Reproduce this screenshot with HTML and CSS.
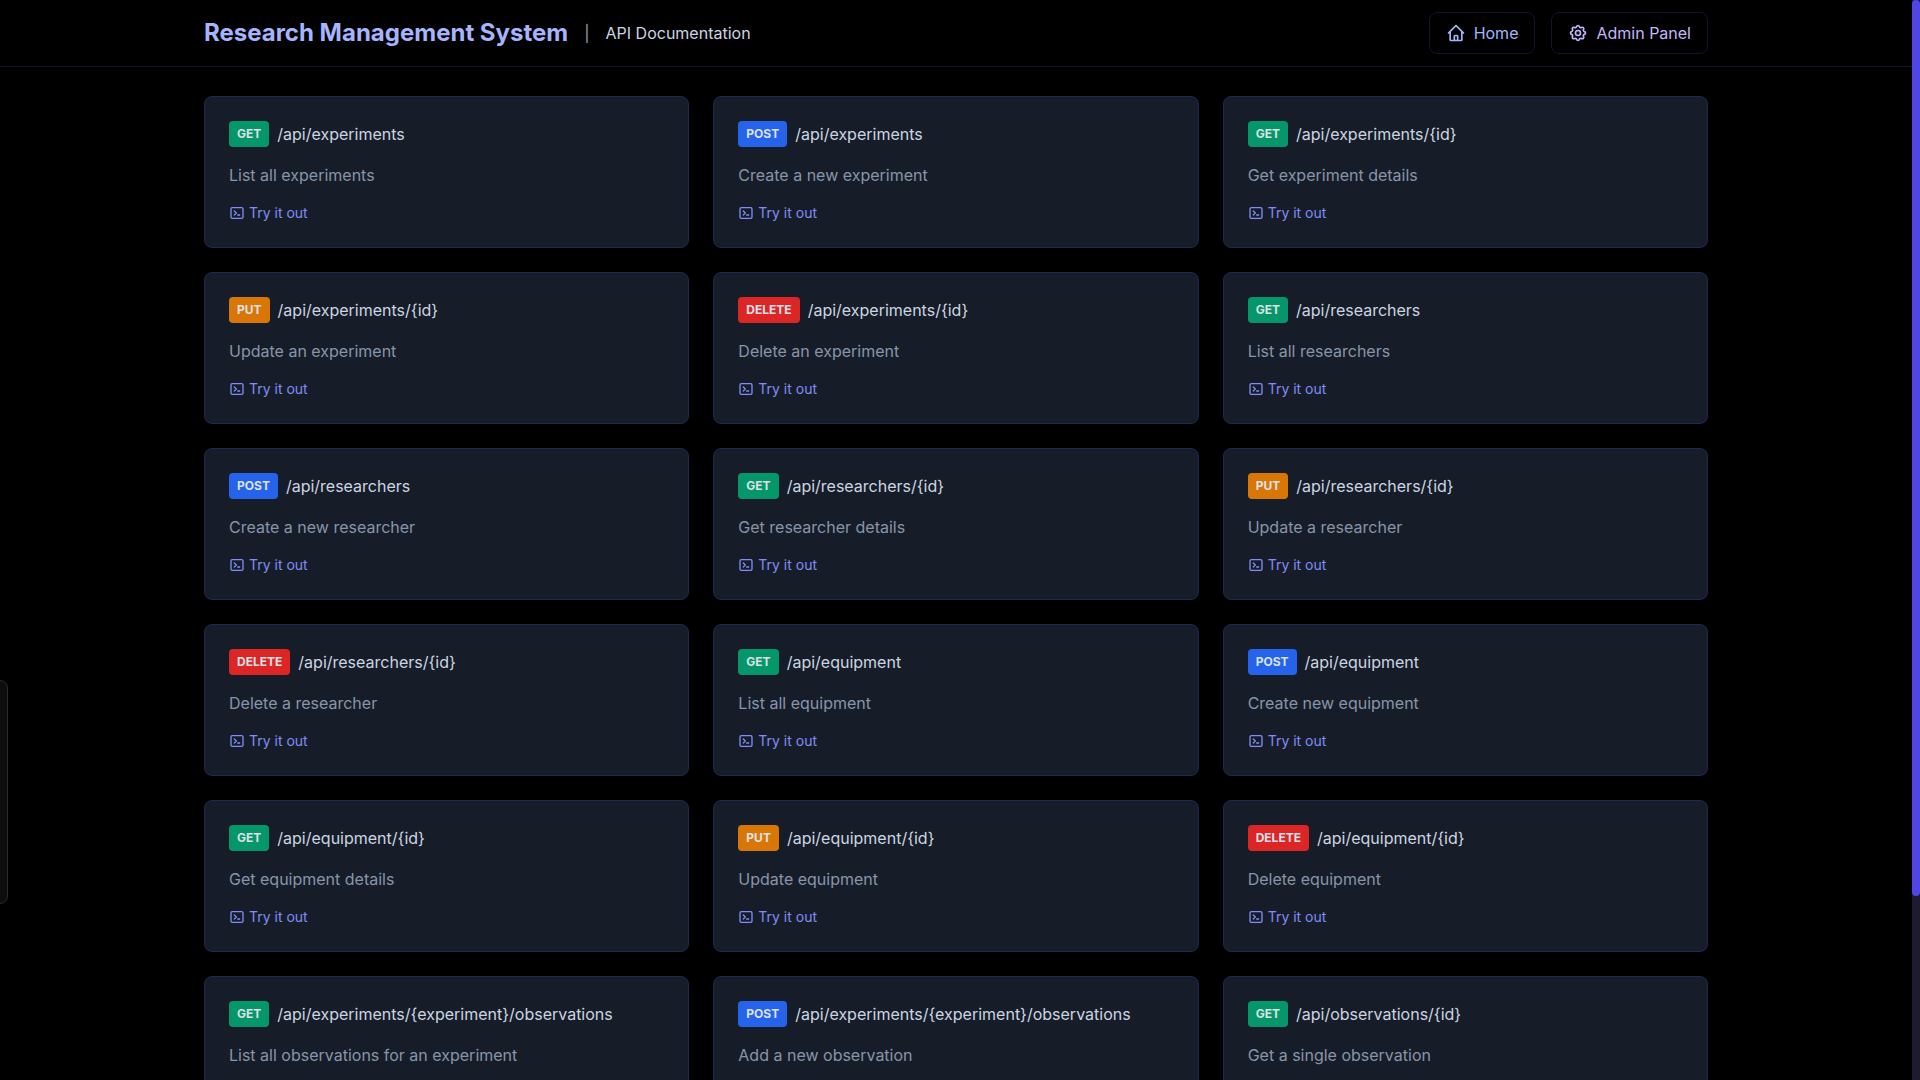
FILE: index.html
```html
<!DOCTYPE html>
<html lang="en">
<head>
<meta charset="utf-8">
<title>Research Management System | API Documentation</title>
<link rel="stylesheet" href="styles.css">
</head>
<body>
<svg class="sprite" aria-hidden="true">
  <symbol id="terminal" viewBox="0 0 24 24"><path d="M8 9l3 3-3 3m5 0h3M5 20h14a2 2 0 002-2V6a2 2 0 00-2-2H5a2 2 0 00-2 2v12a2 2 0 002 2z"/></symbol>
</svg>
<header class="topbar">
  <div class="topbar-inner">
    <div class="brand">
      <h1 class="brand-name">Research Management System</h1>
      <span class="divider">|</span>
      <span class="brand-section">API Documentation</span>
    </div>
    <nav class="nav">
      <a class="nav-link" href="#home"><svg class="icon nav-icon" viewBox="0 0 24 24" aria-hidden="true"><path d="M3 12l2-2m0 0l7-7 7 7M5 10v10a1 1 0 001 1h3m10-11l2 2m-2-2v10a1 1 0 01-1 1h-3m-6 0a1 1 0 001-1v-4a1 1 0 011-1h2a1 1 0 011 1v4a1 1 0 001 1m-6 0h6"/></svg>Home</a>
      <a class="nav-link nav-admin" href="#admin"><svg class="icon nav-icon" viewBox="0 0 24 24" aria-hidden="true"><path d="M10.325 4.317c.426-1.756 2.924-1.756 3.35 0a1.724 1.724 0 002.573 1.066c1.543-.94 3.31.826 2.37 2.37a1.724 1.724 0 001.065 2.572c1.756.426 1.756 2.924 0 3.35a1.724 1.724 0 00-1.066 2.573c.94 1.543-.826 3.31-2.37 2.37a1.724 1.724 0 00-2.572 1.065c-.426 1.756-2.924 1.756-3.35 0a1.724 1.724 0 00-2.573-1.066c-1.543.94-3.31-.826-2.37-2.37a1.724 1.724 0 00-1.065-2.572c-1.756-.426-1.756-2.924 0-3.35a1.724 1.724 0 001.066-2.573c-.94-1.543.826-3.31 2.37-2.37.996.608 2.296.07 2.572-1.065z"/><path d="M15 12a3 3 0 11-6 0 3 3 0 016 0z"/></svg>Admin Panel</a>
    </nav>
  </div>
</header>
<main class="content" id="endpoints"></main>
<div class="side-tab" aria-hidden="true"></div>
<div class="scroll-track" aria-hidden="true"><div class="scroll-thumb"></div></div>
<script src="app.js"></script>
</body>
</html>
```
FILE: styles.css
```css
* { box-sizing: border-box; }
html { scrollbar-width: none; }
body { margin: 0; padding-right: 8px; background: #000; color: #cbd5e1; font: 16px/24px Inter, sans-serif; }
.sprite { display: none; }
.icon { fill: none; stroke: currentColor; stroke-width: 2; stroke-linecap: round; stroke-linejoin: round; }
.topbar { position: fixed; top: 0; left: 0; right: 8px; z-index: 2; background: #000; border-bottom: 1px solid #16122f; }
.topbar-inner { max-width: 1536px; margin: 0 auto; padding: 12px 16px; display: flex; justify-content: space-between; align-items: center; }
.brand { display: flex; align-items: center; gap: 16px; }
.brand-name { margin: 0; font-size: 24px; line-height: 32px; font-weight: 700; color: #a5b4fc; }
.divider { color: #94a3b8; }
.nav { display: flex; gap: 16px; }
.nav-link { display: flex; align-items: center; gap: 8px; padding: 8px 16px; border: 1px solid #16122f; border-radius: 8px; color: #a5b4fc; text-decoration: none; }
.nav-admin { color: #c4b5fd; }
.nav-icon { width: 20px; height: 20px; }
.content { max-width: 1536px; margin: 0 auto; padding: 96px 16px 0; display: grid; grid-template-columns: repeat(3, 1fr); gap: 24px; }
.card { padding: 24px; background: #161d28; border: 1px solid #222750; border-radius: 8px; }
.card-head { display: flex; align-items: center; gap: 8px; margin-bottom: 16px; }
.method { padding: 4px 8px; border-radius: 4px; font-size: 12px; line-height: 18px; font-weight: 700; color: #dbe1e8; }
.get { background: #059669; }
.post { background: #2563eb; }
.put { background: #d97706; }
.delete { background: #dc2626; }
.path { margin: 0; font-size: 16px; font-weight: 400; }
.desc { margin: 0 0 16px; color: #8795aa; }
.try { display: flex; width: fit-content; align-items: center; gap: 4px; font-size: 14px; line-height: 20px; color: #818cf8; text-decoration: none; }
.try-icon { width: 16px; height: 16px; }
.side-tab { position: fixed; left: -8px; top: 680px; width: 16px; height: 224px; background: #0d0d0d; border: 1px solid #2a2a2a; border-radius: 8px; }
.scroll-track { position: fixed; top: 0; right: 0; bottom: 0; width: 8px; background: #1e1b2e; z-index: 3; }
.scroll-thumb { height: 83%; border-radius: 4px; background: #4f46e5; }
```
FILE: app.js
```js
const endpoints = [
  ["GET", "/api/experiments", "List all experiments"],
  ["POST", "/api/experiments", "Create a new experiment"],
  ["GET", "/api/experiments/{id}", "Get experiment details"],
  ["PUT", "/api/experiments/{id}", "Update an experiment"],
  ["DELETE", "/api/experiments/{id}", "Delete an experiment"],
  ["GET", "/api/researchers", "List all researchers"],
  ["POST", "/api/researchers", "Create a new researcher"],
  ["GET", "/api/researchers/{id}", "Get researcher details"],
  ["PUT", "/api/researchers/{id}", "Update a researcher"],
  ["DELETE", "/api/researchers/{id}", "Delete a researcher"],
  ["GET", "/api/equipment", "List all equipment"],
  ["POST", "/api/equipment", "Create new equipment"],
  ["GET", "/api/equipment/{id}", "Get equipment details"],
  ["PUT", "/api/equipment/{id}", "Update equipment"],
  ["DELETE", "/api/equipment/{id}", "Delete equipment"],
  ["GET", "/api/experiments/{experiment}/observations", "List all observations for an experiment"],
  ["POST", "/api/experiments/{experiment}/observations", "Add a new observation"],
  ["GET", "/api/observations/{id}", "Get a single observation"]
];

document.getElementById("endpoints").innerHTML = endpoints.map(([method, path, desc]) => `
  <article class="card">
    <div class="card-head">
      <span class="method ${method.toLowerCase()}">${method}</span>
      <h2 class="path">${path}</h2>
    </div>
    <p class="desc">${desc}</p>
    <a class="try" href="#try"><svg class="icon try-icon" aria-hidden="true"><use href="#terminal"/></svg>Try it out</a>
  </article>`).join("");
```
